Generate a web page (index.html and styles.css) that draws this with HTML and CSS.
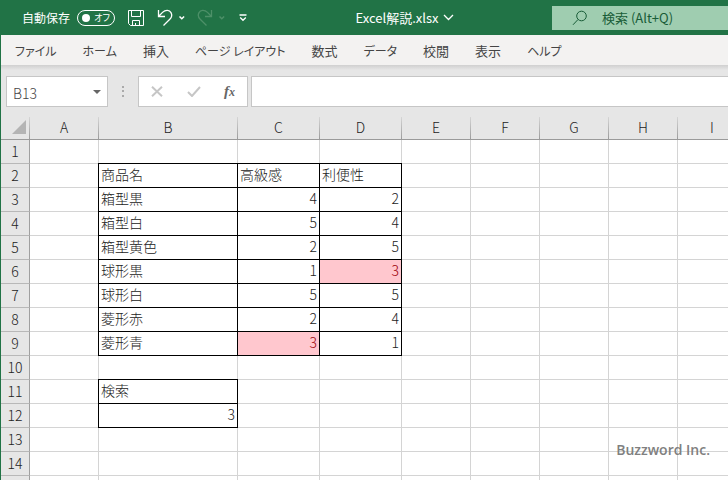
FILE: index.html
```html
<!DOCTYPE html>
<html lang="ja">
<head>
  <meta charset="UTF-8">
  <title>Excel解説.xlsx</title>
  <meta name="viewport" content="width=device-width, initial-scale=1.0">
  <link rel="stylesheet" href="styles.css">
</head>
<body>

<header class="title-bar">
  <div class="quick-access">
    <label class="autosave">
      自動保存
      <span class="switch"><input type="checkbox"><span>オフ</span></span>
    </label>
    <button type="button" class="save-btn" aria-label="上書き保存">
      <svg width="18" height="18" viewBox="0 0 18 18">
        <path d="M1.5 1.5h15v15h-13l-2-2zM4.5 1.5v6h9v-6M5.5 16.5v-5h7v5M8.5 16.5v-2.5"/>
      </svg>
    </button>
    <button type="button" class="undo-btn" aria-label="元に戻す">
      <svg width="28" height="18" viewBox="0 0 28 18">
        <path d="M1.5 1v6.500h6.500M1.500 7.500L5.500 3.400C8.500 .5 12.500 .8 14 3.600C15.300 6 14.600 8.500 12.800 10.300L6.500 16.500" stroke-width="1.3"/>
        <path d="M22.500 7.500l2.300 2.300 2.300-2.300" stroke-width="1.5"/>
      </svg>
    </button>
    <button type="button" class="redo-btn" aria-label="やり直し">
      <svg width="28" height="18" viewBox="0 0 28 18">
        <path d="M14.500 1v6.500h-6.500M14.500 7.500L10.500 3.400C7.500 .5 3.500 .8 2 3.600C.7 6 1.400 8.500 3.200 10.300L9.500 16.500" stroke-width="1.3"/>
        <path d="M22.500 7.500l2.300 2.300 2.300-2.300" stroke-width="1.5"/>
      </svg>
    </button>
    <button type="button" class="more-btn" aria-label="クイック アクセス ツール バーのカスタマイズ">
      <svg width="8" height="8" viewBox="0 0 8 8">
        <path d="M.5 1h7M1.200 3.500l2.800 2.800 2.800-2.800" stroke-width="1.3"/>
      </svg>
    </button>
  </div>

  <button type="button" class="file-name">
    Excel解説.xlsx
    <svg width="11" height="7" viewBox="0 0 11 7"><path d="M1 1l4.500 4.500L10 1" stroke-width="1.3"/></svg>
  </button>

  <label class="search">
    <svg width="16" height="16" viewBox="0 0 16 16">
      <circle cx="9.500" cy="6" r="4.800"/>
      <path d="M6 9.500L1 14.800"/>
    </svg>
    <input type="text" placeholder="検索 (Alt+Q)" aria-label="検索">
  </label>
</header>

<nav class="ribbon-tabs">
  <a href="#" class="kana">ファイル</a>
  <a href="#" class="kana">ホーム</a>
  <a href="#">挿入</a>
  <a href="#" class="kana">ページ レイアウト</a>
  <a href="#">数式</a>
  <a href="#" class="kana">データ</a>
  <a href="#">校閲</a>
  <a href="#">表示</a>
  <a href="#" class="kana">ヘルプ</a>
</nav>

<div class="formula-bar">
  <div class="name-box">
    <input type="text" value="B13" aria-label="名前ボックス">
    <button type="button" aria-label="名前の一覧">
      <svg width="8" height="4" viewBox="0 0 8 4"><path d="M0 0h8L4 4z"/></svg>
    </button>
  </div>
  <svg class="grip" width="2" height="11" viewBox="0 0 2 11"><path d="M0 0h2v2H0zM0 4h2v2H0zM0 9h2v2H0z"/></svg>
  <div class="formula-tools">
    <button type="button" aria-label="キャンセル">
      <svg width="12" height="11" viewBox="0 0 12 11"><path d="M1 .8l10 9.400M11 .8L1 10.200"/></svg>
    </button>
    <button type="button" aria-label="入力">
      <svg width="14" height="11" viewBox="0 0 14 11"><path d="M1 6l4 4 8-9"/></svg>
    </button>
    <button type="button" class="fx" aria-label="関数の挿入"><i>f<small>x</small></i></button>
  </div>
  <input type="text" class="formula-input" aria-label="数式バー">
</div>

<main class="sheet">
  <table>
    <colgroup>
      <col class="col-head"><col class="col"><col class="col-wide"><col class="col-mid"><col class="col-mid">
      <col class="col"><col class="col"><col class="col"><col class="col"><col class="col">
    </colgroup>
    <thead>
      <tr>
        <th class="corner"><svg width="14" height="14" viewBox="0 0 14 14"><path d="M14 0v14H0z"/></svg></th>
        <th>A</th><th>B</th><th>C</th><th>D</th><th>E</th><th>F</th><th>G</th><th>H</th><th>I</th>
      </tr>
    </thead>
    <tbody>
      <tr><th>1</th><td></td><td></td><td></td><td></td><td></td><td></td><td></td><td></td><td></td></tr>
      <tr><th>2</th><td></td><td class="boxed">商品名</td><td class="boxed">高級感</td><td class="boxed">利便性</td><td></td><td></td><td></td><td></td><td></td></tr>
      <tr><th>3</th><td></td><td class="boxed">箱型黒</td><td class="boxed num">4</td><td class="boxed num">2</td><td></td><td></td><td></td><td></td><td></td></tr>
      <tr><th>4</th><td></td><td class="boxed">箱型白</td><td class="boxed num">5</td><td class="boxed num">4</td><td></td><td></td><td></td><td></td><td></td></tr>
      <tr><th>5</th><td></td><td class="boxed">箱型黄色</td><td class="boxed num">2</td><td class="boxed num">5</td><td></td><td></td><td></td><td></td><td></td></tr>
      <tr><th>6</th><td></td><td class="boxed">球形黒</td><td class="boxed num">1</td><td class="boxed num match">3</td><td></td><td></td><td></td><td></td><td></td></tr>
      <tr><th>7</th><td></td><td class="boxed">球形白</td><td class="boxed num">5</td><td class="boxed num">5</td><td></td><td></td><td></td><td></td><td></td></tr>
      <tr><th>8</th><td></td><td class="boxed">菱形赤</td><td class="boxed num">2</td><td class="boxed num">4</td><td></td><td></td><td></td><td></td><td></td></tr>
      <tr><th>9</th><td></td><td class="boxed">菱形青</td><td class="boxed num match">3</td><td class="boxed num">1</td><td></td><td></td><td></td><td></td><td></td></tr>
      <tr><th>10</th><td></td><td></td><td></td><td></td><td></td><td></td><td></td><td></td><td></td></tr>
      <tr><th>11</th><td></td><td class="boxed">検索</td><td></td><td></td><td></td><td></td><td></td><td></td><td></td></tr>
      <tr><th>12</th><td></td><td class="boxed num">3</td><td></td><td></td><td></td><td></td><td></td><td></td><td></td></tr>
      <tr><th>13</th><td></td><td></td><td></td><td></td><td></td><td></td><td></td><td></td><td></td></tr>
      <tr><th>14</th><td></td><td></td><td></td><td></td><td></td><td></td><td></td><td></td><td></td></tr>
      <tr><th>15</th><td></td><td></td><td></td><td></td><td></td><td></td><td></td><td></td><td></td></tr>
    </tbody>
  </table>
  <div class="watermark">Buzzword Inc.</div>
</main>

</body>
</html>
```
FILE: styles.css
```css
* {
  box-sizing: border-box;
}

body {
  margin: 0;
  height: 100vh;
  display: flex;
  flex-direction: column;
  overflow: hidden;
  border-left: 1px solid #217346;
  background-color: #fff;
  font-family: 'Noto Sans CJK JP', sans-serif;
  font-size: 13px;
  color: #444;
}

button,
input {
  margin: 0;
  padding: 0;
  border: none;
  background: none;
  color: inherit;
  font: inherit;
}

svg {
  display: block;
  fill: none;
  stroke: currentColor;
}

/* title bar */
.title-bar {
  flex: none;
  height: 35px;
  display: flex;
  align-items: center;
  background-color: #217346;
  color: #fff;
}

.quick-access {
  display: flex;
  align-items: center;
  padding-left: 21px;
}

.autosave {
  display: flex;
  align-items: center;
  gap: 7px;
  font-size: 12px;
}

.switch {
  display: flex;
  align-items: center;
  justify-content: space-between;
  width: 38px;
  height: 16px;
  padding: 0 4px;
  border: 1px solid #fff;
  border-radius: 8px;
  font-size: 9px;
  font-feature-settings: 'palt';
}

.switch input {
  appearance: none;
  width: 8px;
  height: 8px;
  border-radius: 50%;
  background-color: #fff;
}

.save-btn,
.undo-btn,
.redo-btn {
  margin-left: 12px;
}

.redo-btn {
  color: #4d9068;
}

.more-btn {
  margin-left: 14px;
}

.file-name {
  flex: 1;
  display: flex;
  align-items: center;
  justify-content: center;
  gap: 4px;
  padding-left: 10px;
}

.search {
  flex: 0 0 176px;
  min-width: 0;
  height: 24px;
  display: flex;
  align-items: center;
  gap: 14px;
  padding-left: 20px;
  background-color: #9fcdb0;
  color: #185c37;
}

.search input {
  flex: 1;
  min-width: 0;
}

.search input::placeholder {
  color: #185c37;
  opacity: 1;
}

/* ribbon */
.ribbon-tabs {
  flex: none;
  height: 30px;
  display: flex;
  align-items: center;
  gap: 26px;
  padding-left: 14px;
  background-color: #f3f2f1;
  font-feature-settings: 'palt';
}

.ribbon-tabs a {
  color: #444;
  text-decoration: none;
  white-space: nowrap;
}

.ribbon-tabs .kana {
  font-size: 12px;
}

/* formula bar */
.formula-bar {
  flex: none;
  height: 52px;
  display: flex;
  align-items: flex-start;
  padding: 11px 0 0 5px;
  background: linear-gradient(#d0d0d0, #e6e6e6 5px);
}

.name-box,
.formula-tools,
.formula-input {
  height: 31px;
  border: 1px solid #c6c6c6;
  background-color: #fff;
}

.name-box {
  display: flex;
  align-items: center;
  width: 102px;
  padding: 0 6px;
}

.name-box input {
  flex: 1;
  min-width: 0;
  padding-top: 3px;
  font-size: 14px;
  font-weight: 300;
}

.name-box svg {
  fill: #666;
  stroke: none;
}

.grip {
  margin: 10px 14px;
  fill: #aaa;
  stroke: none;
}

.formula-tools {
  display: flex;
  align-items: center;
  justify-content: space-between;
  width: 110px;
  padding: 0 12px;
  color: #c6c6c6;
}

.formula-tools svg {
  stroke-width: 2;
}

.formula-tools .fx {
  font-family: 'Liberation Serif', serif;
  font-size: 15px;
  font-weight: bold;
  line-height: 16px;
  color: #666;
}

.fx small {
  font-size: 12px;
}

.formula-input {
  flex: 1;
  min-width: 0;
  margin-left: 3px;
  border-right: none;
}

/* sheet */
.sheet {
  position: relative;
  flex: 1;
  min-height: 0;
  overflow: hidden;
}

table {
  width: 746px;
  table-layout: fixed;
  border-collapse: separate;
  border-spacing: 0;
  color: #222;
}

.col-head {
  width: 29px;
}

.col {
  width: 69px;
}

.col-wide {
  width: 139px;
}

.col-mid {
  width: 82px;
}

th,
td {
  height: 24px;
  padding: 0 2px 3px;
  border-right: 1px solid #d4d4d4;
  border-bottom: 1px solid #d4d4d4;
  font-size: 14px;
  font-weight: 300;
  line-height: 20px;
  white-space: nowrap;
}

th {
  padding: 0 0 2px;
  background-color: #e6e6e6;
  text-align: center;
}

thead th {
  height: 23px;
  border-right: 1px solid;
  border-image: linear-gradient(#d8d8d8, #999) 1;
  border-bottom: 1px solid;
}

tbody th {
  border-right-color: #a0a0a0;
  border-bottom-color: #b8b8b8;
}

.corner svg {
  margin-left: 11px;
  fill: #b4b4b4;
  stroke: none;
}

.boxed {
  border-color: #000;
  box-shadow: -1px -1px 0 #000, 0 -1px 0 #000, -1px 0 0 #000;
}

.num {
  text-align: right;
}

.match {
  background-color: #ffc7ce;
  color: #9c0006;
}

.watermark {
  position: absolute;
  right: 18px;
  bottom: 20px;
  font-family: 'Open Sans', sans-serif;
  font-size: 14px;
  font-weight: 600;
  line-height: 20px;
  color: #808080;
}
```
